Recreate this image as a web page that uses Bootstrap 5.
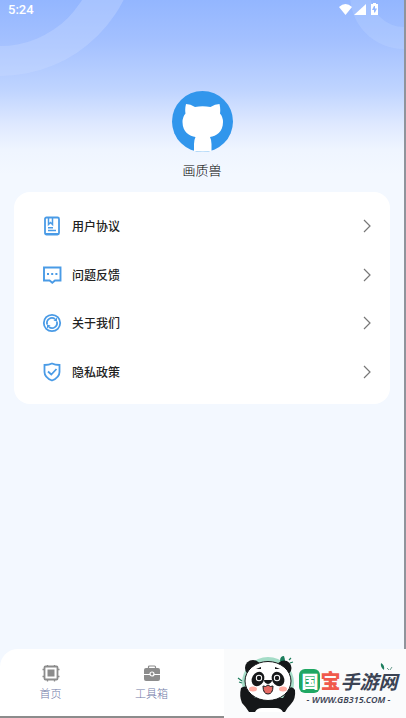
<!DOCTYPE html>
<html lang="zh-CN">
<head>
<meta charset="utf-8">
<meta name="viewport" content="width=device-width, initial-scale=1">
<title>画质兽</title>
<link rel="stylesheet" href="https://cdn.jsdelivr.net/npm/bootstrap@5.3.0/dist/css/bootstrap.min.css">
<style>
body{font-family:"Noto Sans CJK SC","Noto Sans",sans-serif;background:#f3f8ff;color:#222}
.app-shell{border-right:2px solid #8f949c;border-bottom:2px solid #8c8c8c;background:linear-gradient(#93b6ff 0,#a3c0ff 40px,#bfd4ff 90px,#dfe9ff 125px,#eff5ff 150px,#f3f8ff 175px)}
.rings{top:0;left:0;width:140px;height:80px}
.rings-end{top:0;right:0;width:60px;height:60px}
.status-bar{height:20px;padding:0 24px 0 8px}
.clock{font:500 13px/18px Roboto,"Noto Sans",sans-serif}
.profile{padding-top:71px}
.user-name{font-size:13px;line-height:20px;margin:8px 0 12px;font-weight:300;color:#000}
.menu-card{margin:0 14px;min-height:212px;padding:10px 18px 8px 28px;border-radius:16px}
.menu-row{color:#222;font-size:12px;line-height:20px;font-weight:500;gap:10px}
.tab-bar{height:67px;border-radius:18px 0 0 0}
.tab{font-size:11px;line-height:16px;color:#707aa8;font-weight:300;padding-top:15px;gap:3px}
.site-mark{right:0;bottom:0;width:182px;height:69px;background:#fafbfc;padding:0 8px 0 12px;gap:1px}
.brand{font-size:19px;line-height:26px;font-weight:700;color:#3b4354;margin-top:6px}
.brand-a{font-size:17px;line-height:24px;background:#1fa763;color:#fff;border-radius:6px;padding:0 2px;font-weight:900}
.brand-b{font-size:20px;color:#f0594c;font-weight:900}
.site-url{font:italic 600 9px/12px "Noto Sans",sans-serif;color:#3b4354}
</style>
<script src="https://cdn.jsdelivr.net/npm/bootstrap@5.3.0/dist/js/bootstrap.bundle.min.js"></script>
</head>
<body>
<div class="app-shell min-vh-100 d-flex flex-column position-relative">
  <svg class="rings position-absolute" viewBox="0 0 140 80" aria-hidden="true"><path fill="#c9dcff" fill-opacity=".36" fill-rule="evenodd" d="M-138-61a138 137 0 1 0 276 0a138 137 0 1 0-276 0zM-96-50a96 96 0 1 0 192 0a96 96 0 1 0-192 0z"/></svg>
  <svg class="rings-end position-absolute" viewBox="0 0 60 60" aria-hidden="true"><path fill="#c9dcff" fill-opacity=".24" fill-rule="evenodd" d="M6-5a54 54 0 1 0 108 0a54 54 0 1 0-108 0zM26-7a34 34 0 1 0 68 0a34 34 0 1 0-68 0z"/></svg>

  <header class="status-bar d-flex justify-content-between align-items-center text-white position-relative">
    <span class="clock">5:24</span>
    <svg width="42" height="16" viewBox="0 0 42 16" fill="#fff" aria-label="Wi-Fi 信号 电池">
      <path d="M1 5Q7.500-.8 14 5L7.500 13z"/><path d="M28 2v11H16z"/>
      <path d="M35 1h3v1h2v11h-7V2h2z"/><path fill="#94b7ff" d="M36 4h1v2.500h2l-2 4h-1V8h-2z"/>
    </svg>
  </header>

  <main class="flex-grow-1">
    <section class="profile text-center position-relative">
      <svg class="d-block mx-auto" width="61" height="61" viewBox="0 0 61 61" role="img" aria-label="头像">
        <circle cx="30.500" cy="30.500" r="30.500" fill="#3196ec"/>
        <path fill="#fff" d="M14 13Q18.500 13 23 16Q30.500 14.500 38.500 16Q43 13 47.500 13Q48.700 18 48 22.500Q51 26 51 31C51 41 44 45 38 46Q39.500 49 39.500 53V60Q30.500 61.500 22 60V53Q22 49 23.500 46C17.500 45 10.500 41 10.500 31Q10.500 26 13.500 22.500Q12.700 18 14 13z"/>
      </svg>
      <h1 class="user-name">画质兽</h1>
    </section>

    <nav class="menu-card bg-white d-flex flex-column" aria-label="设置">
      <a class="menu-row d-flex flex-fill align-items-center text-decoration-none" href="#agreement">
        <svg width="20" height="20" viewBox="0 0 20 20" fill="none" stroke="#4a9be6" stroke-width="1.800"><rect x="3" y="1.500" width="14" height="17" rx="1.500"/><path stroke-width="1.500" d="M6.500 2v6.500l2-2 2 2V2M6 11.700h5M6 14.500h8M3 17.800h14"/></svg>
        <span class="flex-grow-1">用户协议</span>
        <svg width="10" height="14" viewBox="0 0 10 14" fill="none" stroke="#777" stroke-width="1.200"><path d="M2 1l6 6-6 6"/></svg>
      </a>
      <a class="menu-row d-flex flex-fill align-items-center text-decoration-none" href="#feedback">
        <svg width="20" height="20" viewBox="0 0 20 20" fill="none" stroke="#4a9be6" stroke-width="1.900"><path d="M2 2.500h16.500v13H13l-2.700 2.200-2.700-2.200H2z"/><path stroke-width="2" d="M5 9h2M9.200 9h2M13.400 9h2"/></svg>
        <span class="flex-grow-1">问题反馈</span>
        <svg width="10" height="14" viewBox="0 0 10 14" fill="none" stroke="#777" stroke-width="1.200"><path d="M2 1l6 6-6 6"/></svg>
      </a>
      <a class="menu-row d-flex flex-fill align-items-center text-decoration-none" href="#about">
        <svg width="20" height="20" viewBox="0 0 20 20" fill="none" stroke="#4a9be6" stroke-width="1.800"><circle cx="10" cy="10" r="8.200"/><path d="M5.200 11.500A5 5 0 0 1 13 6M14.800 8.500A5 5 0 0 1 7 14"/><path fill="#4a9be6" stroke="none" d="M11.500 7.500l3.500-3v4zM8.500 12.500l-3.500 3v-4z"/></svg>
        <span class="flex-grow-1">关于我们</span>
        <svg width="10" height="14" viewBox="0 0 10 14" fill="none" stroke="#777" stroke-width="1.200"><path d="M2 1l6 6-6 6"/></svg>
      </a>
      <a class="menu-row d-flex flex-fill align-items-center text-decoration-none" href="#privacy">
        <svg width="20" height="20" viewBox="0 0 20 20" fill="none" stroke="#4a9be6" stroke-width="1.800"><path d="M10 1.500Q13 3 17.500 3v7q0 5.500-7.500 8.500Q2.500 15.500 2.500 10V3Q7 3 10 1.500z"/><path d="M6 9.500l3.300 3L14.500 7"/></svg>
        <span class="flex-grow-1">隐私政策</span>
        <svg width="10" height="14" viewBox="0 0 10 14" fill="none" stroke="#777" stroke-width="1.200"><path d="M2 1l6 6-6 6"/></svg>
      </a>
    </nav>
  </main>

  <nav class="tab-bar bg-white" aria-label="主导航">
    <div class="row g-0">
      <a class="tab col-3 d-flex flex-column align-items-center text-decoration-none" href="#home">
        <svg width="18" height="18" viewBox="0 0 18 18" fill="none" stroke="#8c8c8c" stroke-width="1.800"><rect x="2.500" y="2.500" width="13" height="13" rx="1"/><rect x="5.500" y="5.500" width="7" height="7" fill="#8c8c8c" stroke="none"/><path stroke-width="1.300" d="M5.500 1v2M12.500 1v2M5.500 15v2.500M12.500 15v2.500M.5 5.500h2M.5 12.500h2M15.500 5.500h2M15.500 12.500h2"/></svg>
        <span>首页</span>
      </a>
      <a class="tab col-3 d-flex flex-column align-items-center text-decoration-none" href="#tools">
        <svg width="18" height="18" viewBox="0 0 18 18"><path fill="none" stroke="#8c8c8c" stroke-width="1.200" d="M5.500 4.500V3q0-1 1-1h5q1 0 1 1v1.500"/><rect x="1" y="4" width="16" height="13" rx="2" fill="#8c8c8c"/><path stroke="#fff" d="M1 10.500h16"/><circle cx="9" cy="10" r="2" fill="#8c8c8c" stroke="#fff" stroke-width="1.200"/></svg>
        <span>工具箱</span>
      </a>
    </div>
  </nav>
</div>

<aside class="site-mark position-fixed d-flex align-items-center">
  <svg class="flex-shrink-0" width="62" height="62" viewBox="0 0 62 62" role="img" aria-label="熊猫">
    <circle cx="32" cy="30" r="26" fill="#a4dcc7"/>
    <path fill="none" stroke="#1d7e5d" stroke-width="1.200" d="M2 25l4 3M3 29l3 1M53 7l2-2M54 10l3-1"/>
    <path fill="#1d7e5d" d="M44 8q0-5 4-5q2 6 0 8z"/>
    <path fill="#151719" d="M5 35q5-4 9 2l5 8h28l5-9q4-4 7 1q1 9-4 14q-4 4-6 8H13q-3-5-7-9Q3 43 5 35z"/>
    <circle cx="17" cy="15" r="8" fill="#151719"/><circle cx="48" cy="15" r="7.500" fill="#151719"/>
    <ellipse cx="32" cy="28" rx="23" ry="19.500" fill="#fff" stroke="#151719"/>
    <path fill="#fff" d="M19 59q2-4 7-4h14q5 0 7 4z"/>
    <ellipse cx="22" cy="26" rx="6" ry="7.500" fill="#151719" transform="rotate(30 22 26)"/><ellipse cx="42" cy="26" rx="6" ry="7.500" fill="#151719" transform="rotate(-30 42 26)"/>
    <circle cx="23" cy="25" r="3.200" fill="#fff"/><circle cx="41" cy="25" r="3.200" fill="#fff"/><circle cx="23" cy="25" r="2.200" fill="#151719"/><circle cx="41" cy="25" r="2.200" fill="#151719"/>
    <path fill="#151719" d="M28 27h8q0 3-4 4q-4-1-4-4zM20 16l5-2v2zM39 14l5 2h-5z"/>
    <path fill="#e76b64" stroke="#151719" d="M27 33q2.500 1.500 5-1q2.500 2.500 5 1q0 8-5 8t-5-8z"/>
    <ellipse cx="17" cy="36" rx="4" ry="2.500" fill="#ffaca2"/><ellipse cx="47" cy="36" rx="4" ry="2.500" fill="#ffaca2"/>
  </svg>
  <div class="flex-grow-1 text-center text-nowrap position-relative">
    <svg class="position-absolute top-0 end-0" width="18" height="12" viewBox="0 0 18 12"><path fill="#1d7e5d" d="M1 1q4 2 3 7Q0 5 1 1z"/><path fill="none" stroke="#6a9d8e" d="M7 6l2 2M12 5l-2 3"/></svg>
    <div class="brand d-flex align-items-center justify-content-center"><span class="brand-a">国</span><span class="brand-b">宝</span><em>手游网</em></div>
    <div class="site-url">- WWW.GB315.COM -</div>
  </div>
</aside>
</body>
</html>
